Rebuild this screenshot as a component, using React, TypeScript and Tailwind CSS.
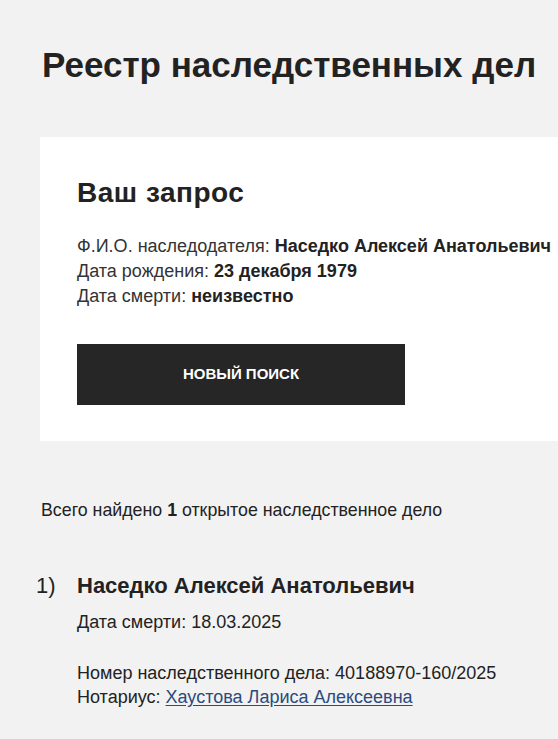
import React from 'react'

const query = [
    { label: 'Ф.И.О. наследодателя:', value: 'Наседко Алексей Анатольевич' },
    { label: 'Дата рождения:', value: '23 декабря 1979' },
    { label: 'Дата смерти:', value: 'неизвестно' },
]

const App = () => {
    return (
        <div className="min-h-[739px] bg-[#f2f2f2] text-[#222] font-['Liberation_Sans',Arial,sans-serif] overflow-hidden">

            <h1 className="pl-[42px] pt-[43px] text-[35px] leading-[44px] font-bold whitespace-nowrap">
                Реестр наследственных дел
            </h1>

            <div className="ml-[40px] mt-[50px] bg-white pl-[37px] pt-[40px] pb-[36px] w-[560px]">
                <h2 className="text-[28px] leading-[32px] font-bold tracking-[0.5px]">Ваш запрос</h2>

                <div className="mt-[25px] text-[18px] leading-[25px] whitespace-nowrap">
                    {query.map(({ label, value }) => (
                        <p key={label}>
                            <span className="text-[#333]">{label}</span> <b className="font-bold">{value}</b>
                        </p>
                    ))}
                </div>

                <button className="mt-[35px] w-[328px] h-[61px] bg-[#262626] text-white text-[15px] font-bold uppercase">
                    Новый поиск
                </button>
            </div>

            <p className="pl-[41px] mt-[57px] text-[17.8px] leading-[24px]">
                Всего найдено <b>1</b> открытое наследственное дело
            </p>

            <div className="flex mt-[49px]">
                <span className="w-[77px] pl-[36px] text-[22px] leading-[30px]">1)</span>
                <div className="text-[18px] leading-[24px]">
                    <h3 className="text-[22px] leading-[30px] font-bold">Наседко Алексей Анатольевич</h3>
                    <p className="mt-[9px]">Дата смерти: 18.03.2025</p>
                    <p className="mt-[27px]">Номер наследственного дела: 40188970-160/2025</p>
                    <p>
                        Нотариус: <a href="#" className="text-[#2c4a7e] underline underline-offset-2">Хаустова Лариса Алексеевна</a>
                    </p>
                </div>
            </div>

        </div>
    )
}

export default App
